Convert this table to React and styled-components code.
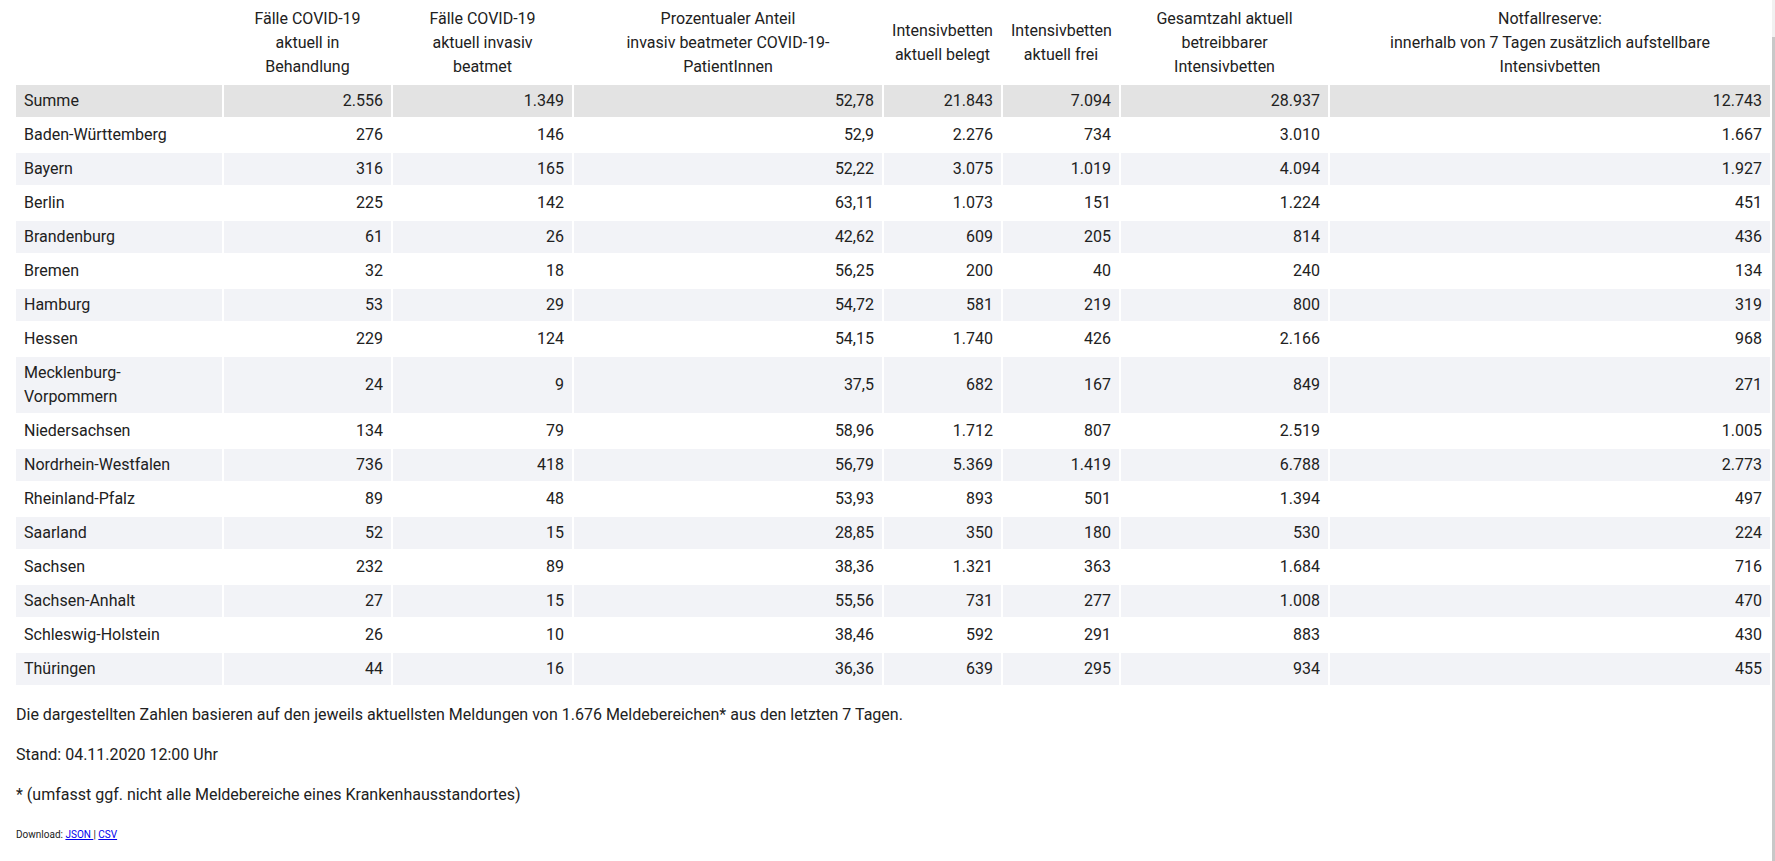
import React from 'react';
import styled, { createGlobalStyle } from 'styled-components';

const GlobalStyle = createGlobalStyle`
    html, body {
        margin: 0;
        padding: 0;
        background: #fff;
    }
    body {
        font-family: 'Roboto', 'Liberation Sans', sans-serif;
        font-size: 16px;
        line-height: 24px;
        color: #212121;
    }
`;

const Page = styled.div`
    padding: 1px 5px 0 16px;
`;

const Table = styled.table`
    table-layout: fixed;
    border-collapse: separate;
    border-spacing: 2px;
    margin: 0 -2px;
    width: calc(100% + 4px);
`;

const Head = styled.th`
    width: ${p => p.w}px;
    box-sizing: border-box;
    padding: 4px 8px;
    font-weight: 400;
    text-align: center;
    vertical-align: middle;
`;

const Row = styled.tr`
    background: ${p => (p.sum ? '#e3e3e3' : p.alt ? '#f2f3f7' : '#fff')};
`;

const Cell = styled.td`
    padding: 4px 8px;
    text-align: ${p => (p.label ? 'left' : 'right')};
    vertical-align: middle;
`;

const Note = styled.p`
    margin: 16px 0;
`;

const Download = styled.p`
    margin: 16px 0;
    font-size: 10px;

    a {
        color: #0000ee;
        text-decoration: underline;
    }
`;

const Scrollbar = styled.div`
    position: fixed;
    top: 0;
    right: 0;
    width: 3px;
    height: 100%;
    background: linear-gradient(to bottom, #f1f1f1 0, #f1f1f1 37px, #c8c8c8 37px);
`;

const columns = [
    { w: 206, lines: [] },
    { w: 167, lines: ['Fälle COVID-19', 'aktuell in', 'Behandlung'] },
    { w: 179, lines: ['Fälle COVID-19', 'aktuell invasiv', 'beatmet'] },
    { w: 308, lines: ['Prozentualer Anteil', 'invasiv beatmeter COVID-19-', 'PatientInnen'] },
    { w: 117, lines: ['Intensivbetten', 'aktuell belegt'] },
    { w: 116, lines: ['Intensivbetten', 'aktuell frei'] },
    { w: 207, lines: ['Gesamtzahl aktuell', 'betreibbarer', 'Intensivbetten'] },
    { w: 440, lines: ['Notfallreserve:', 'innerhalb von 7 Tagen zusätzlich aufstellbare', 'Intensivbetten'] },
];

const rows = [
    ['Summe', '2.556', '1.349', '52,78', '21.843', '7.094', '28.937', '12.743'],
    ['Baden-Württemberg', '276', '146', '52,9', '2.276', '734', '3.010', '1.667'],
    ['Bayern', '316', '165', '52,22', '3.075', '1.019', '4.094', '1.927'],
    ['Berlin', '225', '142', '63,11', '1.073', '151', '1.224', '451'],
    ['Brandenburg', '61', '26', '42,62', '609', '205', '814', '436'],
    ['Bremen', '32', '18', '56,25', '200', '40', '240', '134'],
    ['Hamburg', '53', '29', '54,72', '581', '219', '800', '319'],
    ['Hessen', '229', '124', '54,15', '1.740', '426', '2.166', '968'],
    ['Mecklenburg-Vorpommern', '24', '9', '37,5', '682', '167', '849', '271'],
    ['Niedersachsen', '134', '79', '58,96', '1.712', '807', '2.519', '1.005'],
    ['Nordrhein-Westfalen', '736', '418', '56,79', '5.369', '1.419', '6.788', '2.773'],
    ['Rheinland-Pfalz', '89', '48', '53,93', '893', '501', '1.394', '497'],
    ['Saarland', '52', '15', '28,85', '350', '180', '530', '224'],
    ['Sachsen', '232', '89', '38,36', '1.321', '363', '1.684', '716'],
    ['Sachsen-Anhalt', '27', '15', '55,56', '731', '277', '1.008', '470'],
    ['Schleswig-Holstein', '26', '10', '38,46', '592', '291', '883', '430'],
    ['Thüringen', '44', '16', '36,36', '639', '295', '934', '455'],
];

export default function App() {
    return (
        <Page>
            <GlobalStyle />
            <Table>
                <thead>
                    <tr>
                        {columns.map((c, i) => (
                            <Head key={i} w={c.w}>
                                {c.lines.map((l, j) => (
                                    <React.Fragment key={j}>
                                        {j > 0 && <br />}
                                        {l}
                                    </React.Fragment>
                                ))}
                            </Head>
                        ))}
                    </tr>
                </thead>
                <tbody>
                    {rows.map((r, i) => (
                        <Row key={r[0]} sum={i === 0} alt={i > 0 && i % 2 === 0}>
                            {r.map((v, j) => (
                                <Cell key={j} label={j === 0}>
                                    {j === 0 && v === 'Mecklenburg-Vorpommern'
                                        ? (<>Mecklenburg-<br />Vorpommern</>)
                                        : v}
                                </Cell>
                            ))}
                        </Row>
                    ))}
                </tbody>
            </Table>
            <Note>
                Die dargestellten Zahlen basieren auf den jeweils aktuellsten Meldungen von 1.676 Meldebereichen* aus den letzten 7 Tagen.
            </Note>
            <Note>Stand: 04.11.2020 12:00 Uhr</Note>
            <Note>* (umfasst ggf. nicht alle Meldebereiche eines Krankenhausstandortes)</Note>
            <Download>
                Download: <a href="#json">JSON </a>| <a href="#csv">CSV</a>
            </Download>
            <Scrollbar />
        </Page>
    );
}
